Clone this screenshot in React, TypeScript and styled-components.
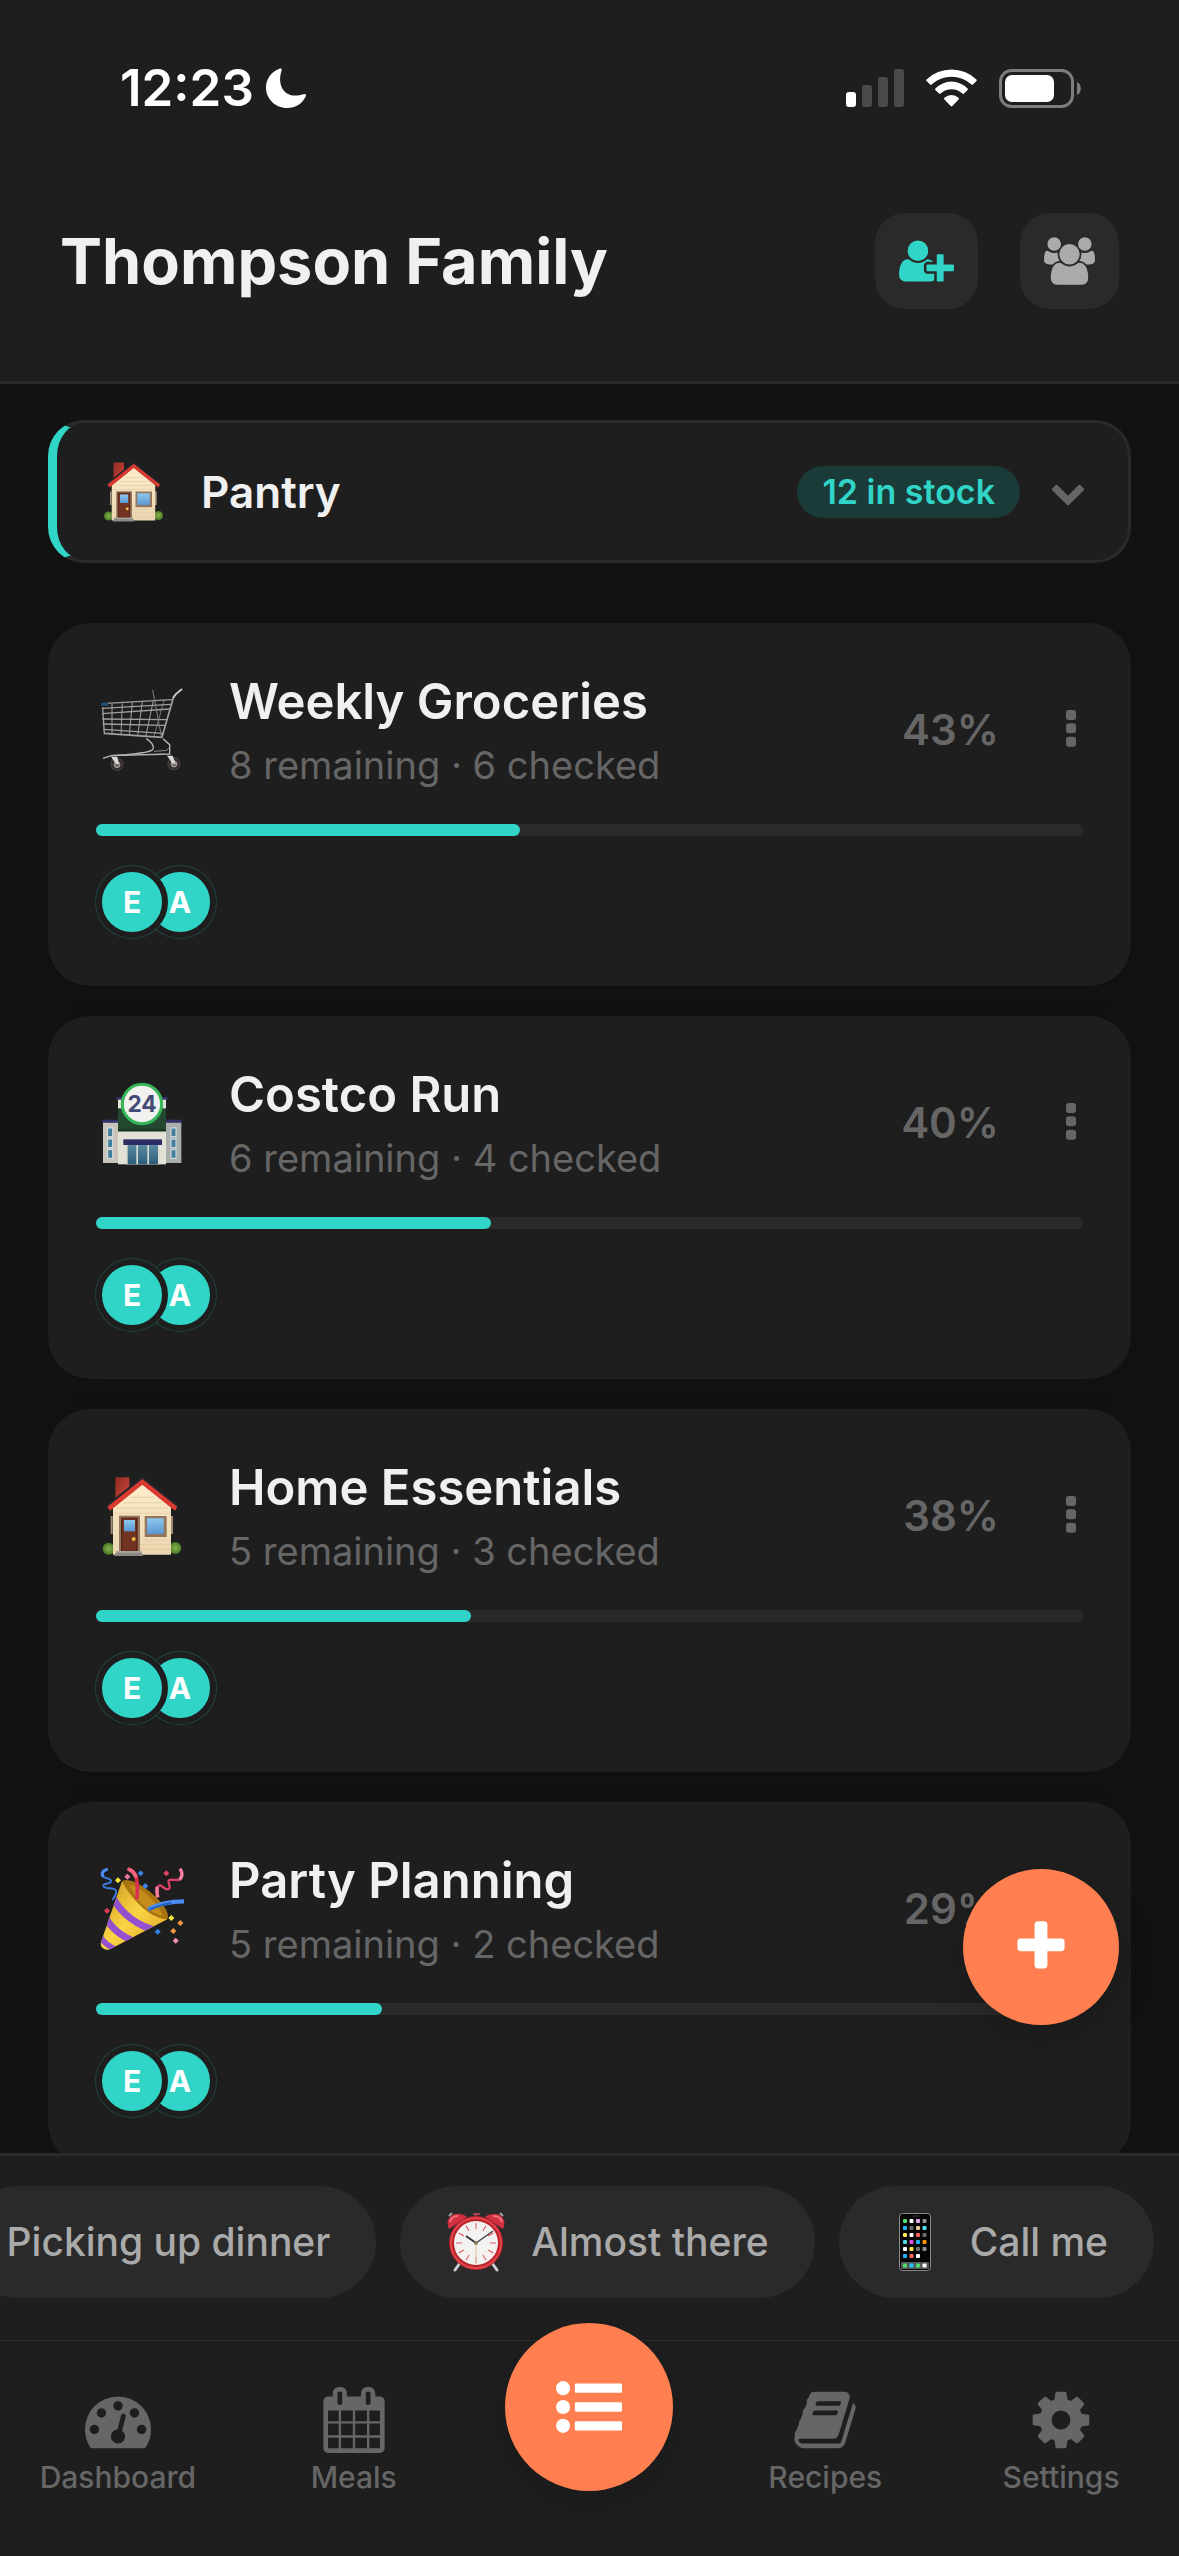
import React from 'react';
import styled, { createGlobalStyle } from 'styled-components';

const colors = {
  page: '#121212',
  surface: '#1e1e1e',
  raised: '#2a2a2a',
  teal: '#30d5c8',
  coral: '#ff7f50',
  text: '#f0f0f0',
  soft: '#aaaaaa',
  muted: '#666666',
};

const GlobalStyle = createGlobalStyle`
  * {
    box-sizing: border-box;
  }

  body {
    margin: 0;
    background: ${colors.page};
    font-family: Inter, 'Liberation Sans', sans-serif;
    color: ${colors.text};
  }

  button {
    border: 0;
    margin: 0;
    padding: 0;
    background: none;
    font: inherit;
    color: inherit;
    cursor: pointer;
  }

  h1, h2, p, ul {
    margin: 0;
    padding: 0;
  }

  ul {
    list-style: none;
  }

  svg {
    display: block;
    flex: none;
  }
`;

/* ---------- glyph icons, drawn on a 1792 unit em ---------- */

const glyphs = {
  userPlus: {
    x: 0,
    width: 2048,
    d: 'M704 896q-159 0-271.500-112.500t-112.500-271.500 112.500-271.500 271.500-112.500 271.500 112.500 112.500 271.500-112.500 271.500-271.500 112.500zm960 128h352q13 0 22.500 9.500t9.500 22.500v192q0 13-9.500 22.500t-22.500 9.500h-352v352q0 13-9.500 22.500t-22.500 9.500h-192q-13 0-22.500-9.500t-9.500-22.500v-352h-352q-13 0-22.500-9.500t-9.500-22.500v-192q0-13 9.500-22.500t22.500-9.500h352v-352q0-13 9.500-22.500t22.500-9.500h192q13 0 22.500 9.500t9.500 22.500v352zm-736 224q0 52 38 90t90 38h256v238q-68 50-171 50h-874q-121 0-194-69t-73-190q0-53 3.500-103.500t14-109 26.500-108.500 43-97.500 62-81 85.500-53.500 111.500-20q19 0 39 17 79 61 154.500 91.500t164.500 30.500 164.500-30.500 154.500-91.500q20-17 39-17 132 0 217 96h-223q-52 0-90 38t-38 90v192z',
  },
  users: {
    x: -64,
    width: 1920,
    d: 'M529 896q-162 5-265 128h-134q-82 0-138-40.500t-56-118.500q0-353 124-353 6 0 43.500 21t97.500 42.500 119 21.500q67 0 133-23-5 37-5 66 0 139 81 256zm1071 637q0 120-73 189.500t-194 69.500h-874q-121 0-194-69.500t-73-189.500q0-53 3.500-103.500t14-109 26.500-108.500 43-97.500 62-81 85.500-53.500 111.500-20q10 0 43 21.500t73 48 107 48 135 21.500 135-21.500 107-48 73-48 43-21.500q61 0 111.500 20t85.500 53.500 62 81 43 97.500 26.500 108.500 14 109 3.500 103.500zm-1024-1277q0 106-75 181t-181 75-181-75-75-181 75-181 181-75 181 75 75 181zm704 384q0 159-112.500 271.500t-271.500 112.500-271.500-112.500-112.500-271.500 112.500-271.500 271.500-112.500 271.500 112.500 112.500 271.500zm576 225q0 78-56 118.500t-138 40.500h-134q-103-123-265-128 81-117 81-256 0-29-5-66 66 23 133 23 59 0 119-21.500t97.500-42.500 43.500-21q124 0 124 353zm-128-609q0 106-75 181t-181 75-181-75-75-181 75-181 181-75 181 75 75 181z',
  },
  chevronDown: {
    x: 0,
    width: 1792,
    d: 'M1683 808l-742 741q-19 19-45 19t-45-19l-742-741q-19-19-19-45.500t19-45.500l166-165q19-19 45-19t45 19l531 531 531-531q19-19 45-19t45 19l166 165q19 19 19 45.500t-19 45.500z',
  },
  ellipsis: {
    x: 704,
    width: 384,
    d: 'M1088 1248v192q0 40-28 68t-68 28h-192q-40 0-68-28t-28-68v-192q0-40 28-68t68-28h192q40 0 68 28t28 68zm0-512v192q0 40-28 68t-68 28h-192q-40 0-68-28t-28-68v-192q0-40 28-68t68-28h192q40 0 68 28t28 68zm0-512v192q0 40-28 68t-68 28h-192q-40 0-68-28t-28-68v-192q0-40 28-68t68-28h192q40 0 68 28t28 68z',
  },
  plus: {
    x: 0,
    width: 1792,
    d: 'M1600 736v192q0 40-28 68t-68 28h-416v416q0 40-28 68t-68 28h-192q-40 0-68-28t-28-68v-416h-416q-40 0-68-28t-28-68v-192q0-40 28-68t68-28h416v-416q0-40 28-68t68-28h192q40 0 68 28t28 68v416h416q40 0 68 28t28 68z',
  },
  dashboard: {
    x: 0,
    width: 1792,
    d: 'M384 1152q0-53-37.500-90.500t-90.500-37.500-90.500 37.500-37.500 90.500 37.500 90.500 90.500 37.500 90.500-37.500 37.500-90.500zm192-448q0-53-37.500-90.500t-90.500-37.500-90.500 37.500-37.500 90.500 37.500 90.500 90.500 37.500 90.500-37.500 37.500-90.500zm428 481l101-382q6-26-7.500-48.500t-38.500-29.500-48 6.500-30 39.500l-101 382q-60 5-107 43.500t-63 98.500q-20 77 20 146t117 89 146-20 89-117q16-60-6-117t-72-91zm660-33q0-53-37.500-90.500t-90.500-37.500-90.500 37.500-37.500 90.500 37.500 90.500 90.500 37.500 90.500-37.500 37.500-90.500zm-640-640q0-53-37.500-90.500t-90.500-37.500-90.500 37.500-37.500 90.500 37.500 90.500 90.500 37.500 90.500-37.500 37.500-90.500zm448 192q0-53-37.500-90.500t-90.500-37.500-90.500 37.500-37.500 90.500 37.500 90.500 90.500 37.500 90.500-37.500 37.500-90.500zm320 448q0 261-141 483-19 29-54 29h-1402q-35 0-54-29-141-221-141-483 0-182 71-348t191-286 286-191 348-71 348 71 286 191 191 286 71 348z',
  },
  calendar: {
    x: 0,
    width: 1792,
    d: 'M192 1664h288v-288h-288v288zm352 0h320v-288h-320v288zm-352-352h288v-320h-288v320zm352 0h320v-320h-320v320zm-352-384h288v-288h-288v288zm736 736h320v-288h-320v288zm-384-736h320v-288h-320v288zm768 736h288v-288h-288v288zm-384-352h320v-320h-320v320zm-352-864v-288q0-13-9.500-22.500t-22.500-9.500h-64q-13 0-22.500 9.500t-9.500 22.500v288q0 13 9.500 22.500t22.500 9.500h64q13 0 22.500-9.500t9.500-22.500zm736 864h288v-320h-288v320zm-384-384h320v-288h-320v288zm384 0h288v-288h-288v288zm32-480v-288q0-13-9.500-22.500t-22.500-9.500h-64q-13 0-22.500 9.500t-9.500 22.500v288q0 13 9.500 22.500t22.500 9.500h64q13 0 22.500-9.500t9.500-22.500zm384-64v1280q0 52-38 90t-90 38h-1408q-52 0-90-38t-38-90v-1280q0-52 38-90t90-38h128v-96q0-66 47-113t113-47h64q66 0 113 47t47 113v96h384v-96q0-66 47-113t113-47h64q66 0 113 47t47 113v96h128q52 0 90 38t38 90z',
  },
  list: {
    x: 0,
    width: 1792,
    d: 'M384 1408q0 80-56 136t-136 56-136-56-56-136 56-136 136-56 136 56 56 136zm0-512q0 80-56 136t-136 56-136-56-56-136 56-136 136-56 136 56 56 136zm1408 416v192q0 13-9.500 22.500t-22.500 9.500h-1216q-13 0-22.500-9.500t-9.500-22.500v-192q0-13 9.500-22.500t22.500-9.500h1216q13 0 22.500 9.500t9.500 22.500zm-1408-928q0 80-56 136t-136 56-136-56-56-136 56-136 136-56 136 56 56 136zm1408 416v192q0 13-9.500 22.500t-22.500 9.500h-1216q-13 0-22.500-9.500t-9.500-22.500v-192q0-13 9.500-22.500t22.500-9.500h1216q13 0 22.500 9.500t9.500 22.500zm0-512v192q0 13-9.500 22.500t-22.500 9.500h-1216q-13 0-22.500-9.500t-9.500-22.500v-192q0-13 9.500-22.500t22.500-9.500h1216q13 0 22.500 9.500t9.500 22.500z',
  },
  book: {
    x: 0,
    width: 1792,
    d: 'M1703 478q40 57 18 129l-275 906q-19 64-76.500 107.500t-122.500 43.500h-923q-77 0-148.500-53.500t-99.500-131.500q-24-67-2-127 0-4 3-27t4-37q1-8-3-21.500t-3-19.500q2-11 8-21t16.500-23.500 16.500-23.500q23-38 45-91.500t30-91.500q3-10 .5-30t-.5-28q3-11 17-28t17-23q21-36 42-92t25-90q1-9-2.500-32t.5-28q4-13 22-30.500t22-22.500q19-26 42.500-84.500t27.500-96.500q1-8-3-25.500t-2-26.500q2-8 9-18t18-23 17-21q8-12 16.500-30.500t15-35 16-36 19.500-32 26.500-23.500 36-11.500 47.500 5.500l-1 3q38-9 51-9h761q74 0 114 56t18 130l-274 906q-36 119-71.500 153.500t-128.500 34.500h-869q-27 0-38 15-11 16-1 43 24 70 144 70h923q29 0 56-15.500t35-41.500l300-987q7-22 5-57 38 15 59 43zm-1064 2q-4 13 2 22.500t20 9.500h608q13 0 25.500-9.500t16.500-22.500l21-64q4-13-2-22.500t-20-9.500h-608q-13 0-25.500 9.500t-16.500 22.500zm-83 256q-4 13 2 22.500t20 9.500h608q13 0 25.500-9.500t16.500-22.500l21-64q4-13-2-22.500t-20-9.500h-608q-13 0-25.500 9.500t-16.500 22.500z',
  },
  cog: {
    x: 0,
    width: 1792,
    d: 'M1152 896q0-106-75-181t-181-75-181 75-75 181 75 181 181 75 181-75 75-181zm512-109v222q0 12-8 23t-20 13l-185 28q-19 54-39 91 35 50 107 138 10 12 10 25t-9 23q-27 37-99 108t-94 71q-12 0-26-9l-138-108q-44 23-91 38-16 136-29 186-7 28-36 28h-222q-14 0-24.500-8.500t-11.500-21.500l-28-184q-49-16-90-37l-141 107q-10 9-25 9-14 0-25-11-126-114-165-168-7-10-7-23 0-12 8-23 15-21 51-66.500t54-70.500q-27-50-41-99l-183-27q-13-2-21-12.500t-8-23.500v-222q0-12 8-23t19-13l186-28q14-46 39-92-40-57-107-138-10-12-10-24 0-10 9-23 26-36 98.500-107.500t94.500-71.500q13 0 26 10l138 107q44-23 91-38 16-136 29-186 7-28 36-28h222q14 0 24.500 8.500t11.500 21.500l28 184q49 16 90 37l142-107q9-9 24-9 13 0 25 10 129 119 165 170 7 8 7 22 0 12-8 23-15 21-51 66.500t-54 70.500q26 50 41 98l183 28q13 2 21 12.500t8 23.500z',
  },
};

type GlyphName = keyof typeof glyphs;

const Glyph = ({ name, size }: { name: GlyphName; size: number }) => {
  const { x, width, d } = glyphs[name];
  return (
    <svg
      width={Math.round((width / 1792) * size)}
      height={size}
      viewBox={`${x} 0 ${width} 1792`}
      fill="currentColor"
      aria-hidden="true"
    >
      <path d={d} />
    </svg>
  );
};

/* ---------- emoji drawings ---------- */

type EmojiProps = { size: number };

const HouseEmoji = ({ size }: EmojiProps) => (
  <svg width={size} height={size} viewBox="60 72 252 252" aria-hidden="true">
    <defs>
      <linearGradient id="wall" x1="0" y1="0" x2="0" y2="1">
        <stop offset="0" stopColor="#fdeccb" />
        <stop offset="1" stopColor="#ead6b0" />
      </linearGradient>
      <linearGradient id="pane" x1="0" y1="0" x2="0" y2="1">
        <stop offset="0" stopColor="#8cc8ee" />
        <stop offset="1" stopColor="#5a97d2" />
      </linearGradient>
      <linearGradient id="brick" x1="0" y1="0" x2="1" y2="1">
        <stop offset="0" stopColor="#8e2b22" />
        <stop offset="1" stopColor="#d3463b" />
      </linearGradient>
      <radialGradient id="bush">
        <stop offset="0" stopColor="#86b24c" />
        <stop offset="1" stopColor="#4b7a25" />
      </radialGradient>
    </defs>
    <path d="M92 198h6v54h-6zM272 198h7v54h-7z" fill="#a08a74" />
    <path d="M106 82h42v40l-42 34z" fill="url(#brick)" />
    <path d="M80 164L187 79l107 85-8 14-99-80-98 80z" fill="#20262b" />
    <circle cx="86" cy="296" r="18" fill="url(#bush)" />
    <circle cx="286" cy="294" r="18" fill="url(#bush)" />
    <path d="M99 172l88-70 86 70v142H99z" fill="url(#wall)" />
    <path
      d="M150 142h74M130 158h114M108 174h158M100 190h172M184 284h88M184 298h88M184 270h88"
      stroke="#dcc79d"
      strokeWidth="2"
    />
    <path d="M82 170L187 87l105 83-7 12-98-78-97 78z" fill="#d9392f" />
    <rect x="117" y="197" width="63" height="108" fill="#93765d" />
    <rect x="123" y="203" width="50" height="100" fill="#54251a" />
    <rect x="127" y="206" width="42" height="96" fill="#733322" />
    <rect x="132" y="210" width="33" height="34" fill="url(#pane)" />
    <circle cx="161" cy="267" r="6" fill="#f0b83c" />
    <rect x="194" y="198" width="66" height="63" fill="#93765d" />
    <rect x="201" y="205" width="50" height="47" fill="url(#pane)" />
    <path d="M110 303h73l6 15h-86z" fill="#8d8a85" />
    <path d="M110 303h73l2 5h-77z" fill="#aaa7a1" />
  </svg>
);

const CartEmoji = ({ size }: EmojiProps) => (
  <svg width={size} height={size} viewBox="60 54 252 252" fill="none" aria-hidden="true">
    <g stroke="#a39f9f" strokeWidth="4">
      <path d="M66 101L276 89" />
      <path d="M66 115L272 103" />
      <path d="M66 131L268 117" />
      <path d="M67 147L262 149" />
      <path d="M68 162L256 166" />
      <path d="M70 178L250 190" />
      <path d="M72 190L246 202" strokeWidth="5" />
      <path d="M68 112l5 80" />
      <path d="M96 102v88M127 100l-4 94M157 97l-9 98M187 95l-14 102M220 92l-23 108" strokeWidth="3" />
      <path d="M252 91l-30 108" strokeWidth="2" />
      <path d="M218 60l26 138" strokeWidth="3" stroke="#85807f" />
      <path d="M280 84l-35 120" strokeWidth="5" />
    </g>
    <path d="M279 84l8-11 19-16" stroke="#c9c8c8" strokeWidth="6" />
    <rect x="63" y="99" width="22" height="9" fill="#1d4d73" />
    <path
      d="M199 206c16 11 24 22 20 31-4 10-40 13-80 17l-46 3-24 8"
      stroke="#b9b8b8"
      strokeWidth="4"
    />
    <path d="M249 206l20 18v28l-176 5" stroke="#b9b8b8" strokeWidth="4" />
    <path d="M222 244l38-3 8-9" stroke="#8d8a8a" strokeWidth="3" />
    <circle cx="111" cy="283" r="18" fill="#312c2b" stroke="#433d3b" strokeWidth="4" />
    <circle cx="282" cy="281" r="18" fill="#312c2b" stroke="#433d3b" strokeWidth="4" />
    <circle cx="111" cy="284" r="9" fill="#77716f" stroke="#a8a2a0" strokeWidth="3" />
    <circle cx="282" cy="282" r="9" fill="#77716f" stroke="#a8a2a0" strokeWidth="3" />
    <path d="M93 260h19l5 22h-9zM261 257h17l9 24h-9z" fill="#dad7d6" />
  </svg>
);

const storeWindows = [
  [83, 204],
  [83, 237],
  [83, 269],
  [273, 204],
  [273, 237],
  [273, 269],
];

const StoreEmoji = ({ size }: EmojiProps) => (
  <svg width={size} height={size} viewBox="60 63 252 252" aria-hidden="true">
    <defs>
      <linearGradient id="glass" x1="0" y1="0" x2="0" y2="1">
        <stop offset="0" stopColor="#5d8ba5" />
        <stop offset="1" stopColor="#2d5c78" />
      </linearGradient>
    </defs>
    <rect x="69" y="187" width="48" height="122" fill="#c9c5bb" />
    <rect x="255" y="187" width="49" height="122" fill="#a9afae" />
    <rect x="66" y="179" width="52" height="9" fill="#33316b" />
    <rect x="254" y="179" width="52" height="9" fill="#33316b" />
    {storeWindows.map(([x, y]) => (
      <rect
        key={`${x}-${y}`}
        x={x}
        y={y}
        width="15"
        height="26"
        fill="#437e9d"
        stroke="#dbe4e6"
        strokeWidth="3"
      />
    ))}
    <rect x="110" y="111" width="152" height="9" fill="#33316b" />
    <rect x="114" y="119" width="144" height="194" fill="#e2e3d6" />
    <rect x="114" y="145" width="144" height="69" fill="#24472f" />
    <rect x="114" y="207" width="144" height="7" fill="#1b3824" />
    <rect x="138" y="254" width="102" height="59" fill="#dadccf" />
    <rect x="143" y="254" width="26" height="59" fill="url(#glass)" />
    <rect x="174" y="254" width="28" height="59" fill="url(#glass)" />
    <rect x="207" y="254" width="27" height="59" fill="url(#glass)" />
    <rect x="130" y="238" width="116" height="17" fill="#2f2d66" />
    <circle cx="186" cy="132" r="59" fill="#f1f1ef" stroke="#35b458" strokeWidth="9" />
    <text
      x="186"
      y="157"
      textAnchor="middle"
      fontFamily="Inter, sans-serif"
      fontSize="68"
      fontWeight="700"
      fill="#434a78"
    >
      24
    </text>
  </svg>
);

const confetti = [
  [114, 121, '#f6e63d'],
  [142, 110, '#f279a5'],
  [182, 100, '#3a83e8'],
  [196, 138, '#3a83e8'],
  [259, 100, '#e2436a'],
  [81, 212, '#e03c5a'],
  [274, 234, '#f7e944'],
  [301, 249, '#f29a3d'],
  [280, 273, '#f29a3d'],
  [233, 275, '#2f7fe6'],
  [287, 302, '#f48fbe'],
] as const;

const PartyEmoji = ({ size }: EmojiProps) => (
  <svg width={size} height={size} viewBox="60 81 252 252" fill="none" aria-hidden="true">
    <defs>
      <linearGradient id="cone" x1="0" y1="0" x2="1" y2="1">
        <stop offset="0" stopColor="#c8901c" />
        <stop offset="0.5" stopColor="#fbd545" />
        <stop offset="1" stopColor="#d79a22" />
      </linearGradient>
      <clipPath id="coneShape">
        <path d="M126 124C150 170 205 236 262 238L90 328c-14 6-32-6-27-22z" />
      </clipPath>
    </defs>
    <ellipse cx="194" cy="181" rx="88" ry="30" transform="rotate(40 194 181)" fill="#a97310" />
    <path d="M150 135c38 8 82 54 98 92-42-6-84-48-98-92z" fill="#c58c1a" />
    <path d="M126 124C150 170 205 236 262 238L90 328c-14 6-32-6-27-22z" fill="url(#cone)" />
    <g clipPath="url(#coneShape)" stroke="#9550cf" strokeWidth="21">
      <path d="M98 172C124 222 176 262 236 272" />
      <path d="M76 232C96 268 124 290 172 308" />
      <path d="M58 286c12 22 28 34 54 44" strokeWidth="17" />
    </g>
    <path d="M147 88c22 8 28 30 24 90" stroke="#d92f52" strokeWidth="11" />
    <path d="M147 88c10 4 16 10 20 20" stroke="#f2637f" strokeWidth="11" strokeLinecap="round" />
    <path d="M204 208c30-16 64-24 108-24" stroke="#4a8cf0" strokeWidth="13" />
    <path d="M208 210c24-12 46-18 66-21" stroke="#2560bb" strokeWidth="6" />
    <path
      d="M83 88c-18 4-20 18-10 24 10 5 22 4 20 12-2 10-26 4-23 14 4 12 32 2 38 14 3 10-4 18-11 28"
      stroke="#3c78dd"
      strokeWidth="6"
    />
    <path d="M83 88c-18 4-20 16-12 22" stroke="#4a8cf0" strokeWidth="9" />
    <path
      d="M300 86c10 18 4 34-8 34-14 0-28-4-26 6 2 12 8 20-4 22-10 0-22-20-28-8-3 8-2 16 1 32"
      stroke="#dc4267"
      strokeWidth="7"
    />
    <path d="M300 86c10 14 6 28-2 32M232 140c-3 10-2 18 1 32" stroke="#f6809e" strokeWidth="10" />
    {confetti.map(([x, y, fill]) => (
      <path key={`${x}-${y}`} d={`M${x} ${y - 9}l9 9-9 9-9-9z`} fill={fill} />
    ))}
  </svg>
);

const ticks = Array.from({ length: 12 }, (_, i) => i * 30);

const ClockEmoji = ({ size }: EmojiProps) => (
  <svg width={size} height={size} viewBox="0 0 60 60" fill="none" aria-hidden="true">
    <path d="M14 51l-5 7M46 51l5 7" stroke="#c9ced4" strokeWidth="3" strokeLinecap="round" />
    <path d="M27 2h7M30 1v7" stroke="#a3474d" strokeWidth="2" />
    <path d="M3 4l3-3M57 4l-3-3" stroke="#9c9ea6" strokeWidth="2" />
    <path d="M3 17C-1 9 4 1 12 2c4 0 7 1 9 3z" fill="#d22f41" />
    <path d="M57 17C61 9 56 1 48 2c-4 0-7 1-9 3z" fill="#d22f41" />
    <path d="M4 10c1-4 4-6 8-6M47 4c4 0 8 2 9 6" stroke="#f27080" strokeWidth="2" />
    <circle cx="30" cy="31" r="27" fill="#b92229" />
    <circle cx="30" cy="31" r="25" stroke="#e2444b" strokeWidth="2" />
    <circle cx="30" cy="31" r="22" fill="#f3f2f1" />
    {ticks.map((angle) => (
      <path
        key={angle}
        d="M30 11v6"
        stroke="#e0535a"
        strokeWidth="1"
        transform={`rotate(${angle} 30 31)`}
      />
    ))}
    <path d="M30 31v21" stroke="#d8c79f" strokeWidth="1" />
    <path d="M30 31l-10-7" stroke="#333" strokeWidth="2" />
    <path d="M30 31l17-12" stroke="#444" strokeWidth="1.500" />
    <circle cx="30" cy="31" r="2" fill="#8d7b56" />
  </svg>
);

const phoneApps = [
  ['#4fe06a', '#ffffff', '#eaa3f5', '#8e8e93'],
  ['#1fb4ff', '#6b6b6f', '#e8c79b', '#52dcef'],
  ['#ffe652', '#ffffff', '#ff655b', '#6b6b6f'],
  ['#4fdbe3', '#dd4fe6', '#1fb4ff', '#ff9500'],
  ['#ffffff', '#ffe652', '#6b6b6f', '#8e8e93'],
  ['#1fb4ff', '#ff655b', '#ffffff'],
];

const phoneDock = ['#4fe06a', '#1fc6ff', '#4fe06a', '#ffffff'];

const PhoneEmoji = ({ size }: EmojiProps) => (
  <svg width={size} height={size} viewBox="0 0 60 60" aria-hidden="true">
    <rect x="14.500" y="1.500" width="31" height="57" rx="3" fill="#050505" stroke="#8b8b8b" />
    <rect x="27" y="3" width="7" height="2" rx="1" fill="#222" />
    {phoneApps.map((row, r) =>
      row.map((fill, c) => (
        <rect
          key={`${r}-${c}`}
          x={18 + c * 6.500}
          y={7 + r * 7}
          width="4"
          height="4"
          rx="1"
          fill={fill}
        />
      )),
    )}
    <rect x="16" y="50" width="28" height="7" rx="1" fill="#55585c" />
    {phoneDock.map((fill, c) => (
      <rect key={c} x={18 + c * 6.500} y="51.500" width="4" height="4" rx="1" fill={fill} />
    ))}
  </svg>
);

/* ---------- status bar ---------- */

const StatusBar = styled.div`
  display: flex;
  align-items: center;
  justify-content: space-between;
  padding: 58px 98px 0 120px;
`;

const StatusGroup = styled.div<{ $gap: number }>`
  display: flex;
  align-items: center;
  gap: ${({ $gap }) => $gap}px;
`;

const Clock = styled.span`
  font-size: 51px;
  line-height: 60px;
  font-weight: 600;
  color: #fff;
`;

const MoonIcon = () => (
  <svg width="40" height="40" viewBox="0 0 40 40" fill="#fff" aria-hidden="true">
    <path d="M13.500.8C15 0 16.200 1 15.600 2.600 12.200 13 15 21 20 24.800c5 3.800 11.500 3.200 17.600 1.400 1.800-.5 3 .4 2.200 2C36.500 35.500 29.500 40 21 40 9.400 40 0 31 0 19.500 0 11 5.200 4 13.500.8z" />
  </svg>
);

const SignalIcon = () => (
  <svg width="58" height="38" viewBox="0 0 58 38" fill="#4a4a4a" aria-hidden="true">
    <rect x="0" y="23" width="10" height="15" rx="3" fill="#fff" />
    <rect x="16" y="16" width="10" height="22" rx="3" />
    <rect x="32" y="8" width="10" height="30" rx="3" />
    <rect x="48" y="0" width="10" height="38" rx="3" />
  </svg>
);

const WifiIcon = () => (
  <svg width="51" height="38" viewBox="0 0 51 38" fill="#fff" aria-hidden="true">
    <path d="M.6 10.400a36.200 36.200 0 0 1 49.800 0q.8.800 0 1.600l-3.400 3.400q-.8.800-1.600 0a30 30 0 0 0-39.800 0q-.8.800-1.600 0L.6 12q-.8-.8 0-1.600z" />
    <path d="M9.400 19.400a22.500 22.500 0 0 1 32.200 0q.8.800 0 1.600l-3.600 3.600q-.8.800-1.600 0a16 16 0 0 0-21.800 0q-.8.800-1.600 0L9.400 21q-.8-.8 0-1.600z" />
    <path d="M18.400 28.800a10.500 10.500 0 0 1 14.200 0q.8.800 0 1.600l-6.300 6.600q-.8.800-1.600 0l-6.300-6.600q-.8-.8 0-1.600z" />
  </svg>
);

const BatteryIcon = () => (
  <svg width="82" height="39" viewBox="0 0 82 39" aria-hidden="true">
    <rect x="1.500" y="1.500" width="72" height="36" rx="11" fill="none" stroke="#7d7d7d" strokeWidth="3" />
    <rect x="6" y="6" width="49" height="27" rx="7" fill="#fff" />
    <path d="M78 13c5 2 5 11 0 13z" fill="#7d7d7d" />
  </svg>
);

/* ---------- page ---------- */

const Screen = styled.div`
  display: flex;
  flex-direction: column;
  height: 100vh;
`;

const Header = styled.header`
  background: ${colors.surface};
  border-bottom: 3px solid ${colors.raised};
`;

const TitleRow = styled.div`
  display: flex;
  align-items: center;
  gap: 42px;
  padding: 95px 60px 72px;
`;

const FamilyName = styled.h1`
  flex: 1;
  font-size: 63px;
  line-height: 78px;
  font-weight: 700;
`;

const HeaderButton = styled.button<{ $active?: boolean }>`
  padding: 24px;
  border-radius: 30px;
  background: ${colors.raised};
  color: ${({ $active }) => ($active ? colors.teal : colors.soft)};
`;

const Main = styled.main`
  position: relative;
  flex: 1;
  min-height: 0;
`;

const ScrollArea = styled.div`
  display: flex;
  flex-direction: column;
  gap: 60px;
  height: 100%;
  padding: 36px 48px 0;
  overflow: hidden;
`;

const PantryButton = styled.button`
  display: flex;
  flex: none;
  align-items: center;
  width: 100%;
  padding: 37px 42px 37px 45px;
  border: 3px solid ${colors.raised};
  border-left: 9px solid ${colors.teal};
  border-radius: 36px;
  background: ${colors.surface};
  text-align: left;
`;

const PantryName = styled.span`
  flex: 1;
  padding-left: 36px;
  font-size: 44px;
  line-height: 54px;
  font-weight: 600;
`;

const StockBadge = styled.span`
  margin-right: 30px;
  padding: 0 25px;
  border-radius: 26px;
  background: #1b3b39;
  font-size: 34px;
  line-height: 52px;
  font-weight: 600;
  color: ${colors.teal};
`;

const Muted = styled.span`
  color: ${colors.muted};
`;

const Lists = styled.ul`
  display: flex;
  flex-direction: column;
  gap: 30px;
`;

const Card = styled.li`
  padding: 48px;
  border-radius: 42px;
  background: ${colors.surface};
  box-shadow: 0 6px 24px rgba(0, 0, 0, 0.1);
`;

const CardHead = styled.div`
  display: flex;
  align-items: center;
  margin-bottom: 35px;
`;

const CardEmoji = styled.span`
  display: flex;
  justify-content: center;
  width: 92px;
  margin-right: 41px;
`;

const CardTitles = styled.div`
  display: flex;
  flex: 1;
  flex-direction: column;
  gap: 8px;
`;

const CardTitle = styled.h2`
  font-size: 49px;
  line-height: 62px;
  font-weight: 600;
`;

const CardSubtitle = styled.p`
  font-size: 38px;
  line-height: 48px;
  color: ${colors.muted};
`;

const Percent = styled.span`
  font-size: 42px;
  line-height: 48px;
  font-weight: 600;
  color: ${colors.muted};
`;

const MoreButton = styled.button`
  display: flex;
  justify-content: center;
  width: 24px;
  margin-left: 60px;
  color: ${colors.muted};
`;

const Track = styled.div`
  height: 12px;
  margin-bottom: 30px;
  border-radius: 6px;
  background: ${colors.raised};
`;

const Fill = styled.div`
  height: 100%;
  border-radius: 6px;
  background: ${colors.teal};
`;

const Members = styled.div`
  display: flex;
  isolation: isolate;
`;

const Avatar = styled.span<{ $order: number }>`
  display: flex;
  align-items: center;
  justify-content: center;
  width: 72px;
  height: 72px;
  margin-left: ${({ $order }) => ($order > 0 ? '-24px' : '0')};
  border: 6px solid ${colors.surface};
  border-radius: 50%;
  background: ${colors.teal};
  box-shadow: 0 0 0 1px rgba(48, 213, 200, 0.2);
  font-size: 30px;
  line-height: 36px;
  font-weight: 700;
  color: #fff;
  z-index: ${({ $order }) => 10 - $order};
`;

const AddButton = styled.button`
  position: absolute;
  right: 60px;
  bottom: 128px;
  display: flex;
  align-items: center;
  justify-content: center;
  width: 156px;
  height: 156px;
  border-radius: 50%;
  background: ${colors.coral};
  color: #fff;
  box-shadow: 0 12px 36px rgba(0, 0, 0, 0.15);
`;

const Footer = styled.footer`
  border-top: 3px solid ${colors.raised};
  background: ${colors.surface};
`;

const Chips = styled.div`
  display: flex;
  justify-content: flex-end;
  gap: 24px;
  padding: 30px 25px 42px;
  overflow: hidden;
`;

const Chip = styled.button`
  display: flex;
  flex: none;
  align-items: center;
  gap: 25px;
  height: 112px;
  padding: 0 46px;
  border-radius: 56px;
  background: ${colors.raised};
  font-size: 39px;
  line-height: 48px;
  font-weight: 500;
  white-space: nowrap;
  color: ${colors.soft};
`;

const Nav = styled.nav`
  display: grid;
  grid-template-columns: repeat(5, 1fr);
  align-items: start;
  height: 216px;
  border-top: 1px solid ${colors.raised};
`;

const NavLink = styled.a`
  display: flex;
  flex-direction: column;
  align-items: center;
  gap: 6px;
  padding-top: 46px;
  font-size: 30px;
  line-height: 36px;
  font-weight: 500;
  text-decoration: none;
  color: ${colors.muted};
`;

const NavCurrent = styled.a`
  display: flex;
  align-items: center;
  justify-content: center;
  justify-self: center;
  width: 168px;
  height: 168px;
  margin-top: -18px;
  border-radius: 50%;
  background: ${colors.coral};
  color: #fff;
  box-shadow: 0 12px 36px rgba(0, 0, 0, 0.15);
`;

type ShoppingList = {
  name: string;
  remaining: number;
  checked: number;
  Emoji: React.ComponentType<EmojiProps>;
};

const lists: ShoppingList[] = [
  { name: 'Weekly Groceries', remaining: 8, checked: 6, Emoji: CartEmoji },
  { name: 'Costco Run', remaining: 6, checked: 4, Emoji: StoreEmoji },
  { name: 'Home Essentials', remaining: 5, checked: 3, Emoji: HouseEmoji },
  { name: 'Party Planning', remaining: 5, checked: 2, Emoji: PartyEmoji },
];

const members = ['E', 'A'];

const ListCard = ({ name, remaining, checked, Emoji }: ShoppingList) => {
  const percent = Math.round((checked / (checked + remaining)) * 100);

  return (
    <Card>
      <CardHead>
        <CardEmoji>
          <Emoji size={84} />
        </CardEmoji>
        <CardTitles>
          <CardTitle>{name}</CardTitle>
          <CardSubtitle>
            {remaining} remaining · {checked} checked
          </CardSubtitle>
        </CardTitles>
        <Percent>{percent}%</Percent>
        <MoreButton aria-label={`${name} options`}>
          <Glyph name="ellipsis" size={48} />
        </MoreButton>
      </CardHead>
      <Track>
        <Fill style={{ width: `${percent}%` }} />
      </Track>
      <Members>
        {members.map((initial, order) => (
          <Avatar key={initial} $order={order}>
            {initial}
          </Avatar>
        ))}
      </Members>
    </Card>
  );
};

const App = () => (
  <Screen>
    <GlobalStyle />
    <Header>
      <StatusBar>
        <StatusGroup $gap={12}>
          <Clock>12:23</Clock>
          <MoonIcon />
        </StatusGroup>
        <StatusGroup $gap={22}>
          <SignalIcon />
          <WifiIcon />
          <BatteryIcon />
        </StatusGroup>
      </StatusBar>
      <TitleRow>
        <FamilyName>Thompson Family</FamilyName>
        <HeaderButton $active aria-label="Invite member">
          <Glyph name="userPlus" size={48} />
        </HeaderButton>
        <HeaderButton aria-label="Members">
          <Glyph name="users" size={48} />
        </HeaderButton>
      </TitleRow>
    </Header>

    <Main>
      <ScrollArea>
        <PantryButton>
          <HouseEmoji size={63} />
          <PantryName>Pantry</PantryName>
          <StockBadge>12 in stock</StockBadge>
          <Muted>
            <Glyph name="chevronDown" size={36} />
          </Muted>
        </PantryButton>
        <Lists>
          {lists.map((list) => (
            <ListCard key={list.name} {...list} />
          ))}
        </Lists>
      </ScrollArea>
      <AddButton aria-label="Add list">
        <Glyph name="plus" size={60} />
      </AddButton>
    </Main>

    <Footer>
      <Chips>
        <Chip>Picking up dinner</Chip>
        <Chip>
          <ClockEmoji size={60} />
          Almost there
        </Chip>
        <Chip>
          <PhoneEmoji size={60} />
          Call me
        </Chip>
      </Chips>
      <Nav>
        <NavLink href="#dashboard">
          <Glyph name="dashboard" size={66} />
          Dashboard
        </NavLink>
        <NavLink href="#meals">
          <Glyph name="calendar" size={66} />
          Meals
        </NavLink>
        <NavCurrent href="#lists" aria-label="Lists">
          <Glyph name="list" size={66} />
        </NavCurrent>
        <NavLink href="#recipes">
          <Glyph name="book" size={66} />
          Recipes
        </NavLink>
        <NavLink href="#settings">
          <Glyph name="cog" size={66} />
          Settings
        </NavLink>
      </Nav>
    </Footer>
  </Screen>
);

export default App;
